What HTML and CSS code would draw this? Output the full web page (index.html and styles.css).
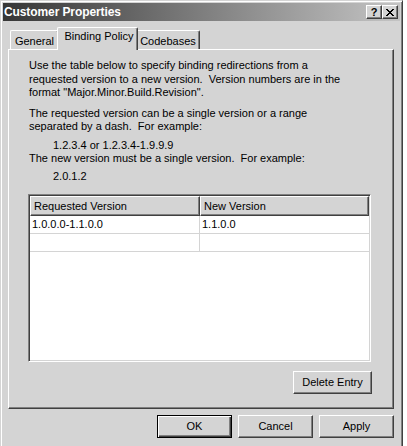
FILE: index.html
```html
<!DOCTYPE html>
<html>
<head>
<meta charset="utf-8">
<link rel="stylesheet" href="styles.css">
</head>
<body>
<div class="window">
  <div class="titlebar">
    <span class="title">Customer Properties</span>
    <div class="capbtns">
      <span class="capbtn help">?</span>
      <span class="capbtn close">
        <svg width="8" height="7" viewBox="0 0 8 7"><path d="M0 0h2v1h1v1h2v-1h1v-1h2v1h-1v1h-1v1h-1v1h1v1h1v1h1v1h-2v-1h-1v-1h-2v1h-1v1h-2v-1h1v-1h1v-1h1v-1h-1v-1h-1v-1h-1z" fill="#000"/></svg>
      </span>
    </div>
  </div>
  <div class="tabs">
    <div class="tab tab-general">General</div>
    <div class="tab tab-active">Binding Policy</div>
    <div class="tab tab-code">Codebases</div>
  </div>
  <div class="panel">
    <p class="para para1">Use the table below to specify binding redirections from a requested version to a new version.&nbsp; Version numbers are in the format "Major.Minor.Build.Revision".</p>
    <p class="para para2">The requested version can be a single version or a range separated by a dash.&nbsp; For example:</p>
    <p class="example ex1">1.2.3.4 or 1.2.3.4-1.9.9.9</p>
    <p class="para para3">The new version must be a single version.&nbsp; For example:</p>
    <p class="example ex2">2.0.1.2</p>
    <div class="list">
      <div class="hdr">
        <div class="hcell col1">Requested Version</div>
        <div class="hcell col2">New Version</div>
      </div>
      <div class="row">
        <div class="cell col1">1.0.0.0-1.1.0.0</div>
        <div class="cell col2">1.1.0.0</div>
      </div>
      <div class="row">
        <div class="cell col1"></div>
        <div class="cell col2"></div>
      </div>
    </div>
    <div class="panelbtns">
      <div class="btn btn-delete">Delete Entry</div>
    </div>
  </div>
  <div class="dlgbtns">
    <div class="btn btn-default">OK</div>
    <div class="btn">Cancel</div>
    <div class="btn">Apply</div>
  </div>
</div>
</body>
</html>
```
FILE: styles.css
```css
html, body {
  margin: 0;
  padding: 0;
  background: #ffffff;
}
body {
  font-family: "Liberation Sans", Arial, sans-serif;
  font-size: 11px;
  color: #000;
  overflow: hidden;
}
.window {
  box-sizing: border-box;
  width: 403px;
  height: 446px;
  background: #d4d4d4;
  border: 1px solid;
  border-bottom-width: 0;
  border-color: #d4d4d4 #404040 #404040 #d4d4d4;
  box-shadow: inset 1px 1px #ffffff, inset -1px 0 #808080;
  padding: 2px 2px 0 2px;
}
.titlebar {
  height: 18px;
  display: flex;
  align-items: center;
  justify-content: space-between;
  background: linear-gradient(to right, #363636 0%, #777777 45%, #c4c4c4 100%);
  padding: 0 2px 0 1px;
}
.title {
  color: #ffffff;
  font-weight: bold;
  font-size: 12px;
  letter-spacing: -0.1px;
  line-height: 18px;
}
.capbtns {
  display: flex;
}
.capbtn {
  box-sizing: border-box;
  width: 16px;
  height: 14px;
  background: #d4d4d4;
  border: 1px solid;
  border-color: #ffffff #404040 #404040 #ffffff;
  box-shadow: inset -1px -1px #808080;
  display: flex;
  align-items: center;
  justify-content: center;
  font-weight: bold;
  font-size: 11px;
  line-height: 12px;
}
.tabs {
  display: flex;
  align-items: flex-end;
  height: 28px;
  padding-left: 7px;
  position: relative;
  z-index: 2;
}
.tab {
  box-sizing: border-box;
  height: 19px;
  background: #d4d4d4;
  border-top: 1px solid #ffffff;
  border-left: 1px solid #ffffff;
  border-right: 1px solid #404040;
  border-top-left-radius: 2px;
  border-top-right-radius: 2px;
  box-shadow: inset -1px 0 #808080;
  text-align: center;
  line-height: 18px;
}
.tab-general {
  width: 49px;
  padding-top: 1px;
}
.tab-active {
  width: 81px;
  height: 23px;
  margin: 0 -2px -1px -2px;
  position: relative;
  z-index: 3;
  line-height: 17px;
  padding: 0 0 4px 3px;
}
.tab-code {
  width: 64px;
  padding-top: 1px;
}
.panel {
  box-sizing: border-box;
  width: 386px;
  height: 360px;
  margin-left: 5px;
  border: 1px solid;
  border-color: #ffffff #404040 #404040 #ffffff;
  box-shadow: inset -1px -1px #808080;
  padding: 9px 0 0 19px;
  position: relative;
  z-index: 1;
}
.para {
  margin: 0;
  padding-left: 1px;
  line-height: 13px;
  width: 325px;
}
.para1 {
  line-height: 13.5px;
}
.para2 {
  margin-top: 7px;
}
.example {
  margin: 6px 0 0 0;
  padding-left: 25px;
  line-height: 13px;
}
.para3 {
  margin-top: 0;
}
.ex2 {
  margin-top: 5px;
}
.list {
  box-sizing: border-box;
  width: 343px;
  height: 168px;
  margin-top: 11px;
  background: #ffffff;
  border: 1px solid;
  border-color: #808080 #ffffff #ffffff #808080;
  box-shadow: inset 1px 1px #404040, inset -1px -1px #d4d4d4;
  padding: 1px;
}
.hdr {
  display: flex;
  height: 20px;
}
.hcell {
  box-sizing: border-box;
  height: 20px;
  background: #d4d4d4;
  border: 1px solid;
  border-color: #ffffff #404040 #404040 #ffffff;
  box-shadow: inset -1px -1px #808080;
  padding-left: 3px;
  line-height: 18px;
}
.hcell.col1 {
  width: 170px;
}
.hcell.col2 {
  flex: 1;
}
.row {
  display: flex;
  height: 18px;
}
.cell {
  box-sizing: border-box;
  height: 18px;
  border-bottom: 1px solid #d4d4d4;
  padding-left: 2px;
  line-height: 17px;
}
.cell.col1 {
  width: 170px;
  border-right: 1px solid #d4d4d4;
}
.cell.col2 {
  flex: 1;
}
.panelbtns {
  display: flex;
  justify-content: flex-end;
  width: 344px;
  margin-top: 9px;
}
.btn {
  box-sizing: border-box;
  width: 75px;
  height: 23px;
  background: #d4d4d4;
  border: 1px solid;
  border-color: #ffffff #404040 #404040 #ffffff;
  box-shadow: inset -1px -1px #808080;
  display: flex;
  align-items: center;
  justify-content: center;
  line-height: 13px;
}
.btn-delete {
  width: 79px;
}
.btn-default {
  border: 1px solid #000000;
  box-shadow: inset 1px 1px #ffffff, inset -1px -1px #404040, inset -2px -2px #808080;
}
.dlgbtns {
  display: flex;
  justify-content: flex-end;
  gap: 6px;
  width: 391px;
  margin-top: 6px;
}
```
